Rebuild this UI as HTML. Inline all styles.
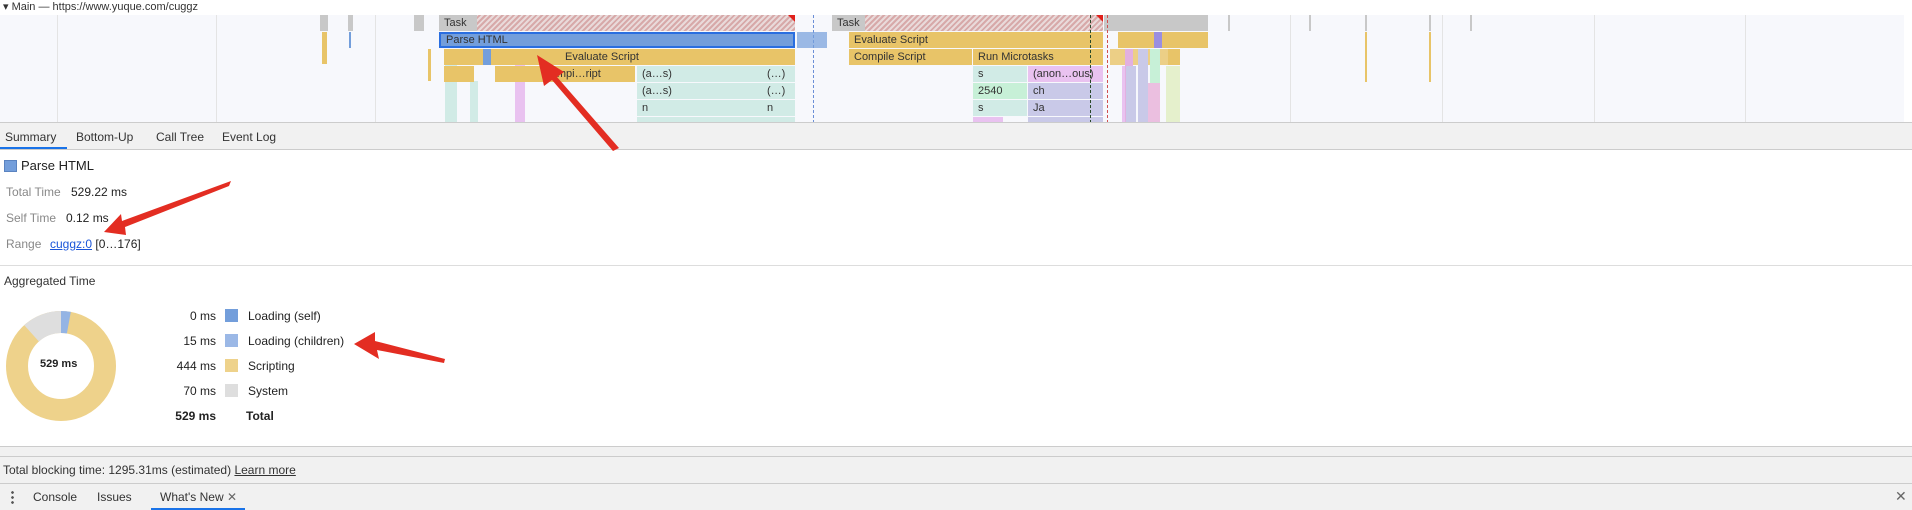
<!DOCTYPE html>
<html><head><meta charset="utf-8"><style>
*{margin:0;padding:0;box-sizing:border-box}
body{width:1912px;height:510px;overflow:hidden;background:#fff;font-family:"Liberation Sans",sans-serif;position:relative;color:#222}
.a{position:absolute}
.f{position:absolute;height:16px;font-size:11px;line-height:16px;padding-left:5px;color:#333;white-space:nowrap;overflow:hidden}
.y{background:#e8c468}.b{background:#739edb}.g{background:#c8c8c8}.t{background:#d1ebe6}.p{background:#e9c2f0}.l{background:#c9c9e8}.gr{background:#c7f0d7}
.s{position:absolute;width:2px}
.lab{font-size:12px;color:#888}
.v{font-size:12px;color:#222}
</style></head><body>
<div class="a" style="left:0;top:0;width:1912px;height:15px;background:#fff;font-size:11px;line-height:15px;padding-left:3px;color:#333">▾ Main — https://www.yuque.com/cuggz</div>
<div class="a" style="left:0;top:15px;width:1912px;height:108px;background:#f7f8fc;overflow:hidden">
 <div class="a" style="left:57px;top:0;width:1px;height:108px;background:#e4e4e4"></div>
 <div class="a" style="left:216px;top:0;width:1px;height:108px;background:#e4e4e4"></div>
 <div class="a" style="left:375px;top:0;width:1px;height:108px;background:#e4e4e4"></div>
 <div class="a" style="left:1290px;top:0;width:1px;height:108px;background:#e4e4e4"></div>
 <div class="a" style="left:1442px;top:0;width:1px;height:108px;background:#e4e4e4"></div>
 <div class="a" style="left:1594px;top:0;width:1px;height:108px;background:#e4e4e4"></div>
 <div class="a" style="left:1745px;top:0;width:1px;height:108px;background:#e4e4e4"></div>
 <div class="s g" style="left:320px;top:0;height:16px;width:8px"></div>
 <div class="s y" style="left:322px;top:17px;height:32px;width:5px"></div>
 <div class="s g" style="left:348px;top:0;height:16px;width:5px"></div>
 <div class="s b" style="left:349px;top:17px;height:16px"></div>
 <div class="s g" style="left:414px;top:0;height:16px;width:10px"></div>
 <div class="s y" style="left:428px;top:34px;height:32px;width:3px"></div>
 <div class="s t" style="left:445px;top:50px;height:58px;width:12px"></div>
 <div class="s p" style="left:515px;top:50px;height:58px;width:10px"></div>
 <div class="s t" style="left:470px;top:66px;height:42px;width:8px"></div>
 <div class="f g" style="left:439px;top:0;width:356px;background:repeating-linear-gradient(135deg,#d7a9a9 0 2px,#e9dada 2px 4px)"><span style="background:#c8c8c8;padding-right:10px;margin-left:-5px;padding-left:5px;display:inline-block">Task</span></div>
 <div class="a" style="left:788px;top:0;width:0;height:0;border-top:7px solid #e0201b;border-left:7px solid transparent"></div>
 <div class="f b" style="left:439px;top:17px;width:356px;border:2px solid #2a6ee0;line-height:12px">Parse HTML</div>
 <div class="f y" style="left:444px;top:34px;width:351px"></div>
 <div class="s b" style="left:483px;top:34px;height:16px;width:8px"></div>
 <div class="f y" style="left:560px;top:34px;width:235px">Evaluate Script</div>
 <div class="f y" style="left:444px;top:51px;width:30px"></div>
 <div class="f y" style="left:495px;top:51px;width:140px">&nbsp; &nbsp; &nbsp; &nbsp; &nbsp; &nbsp; &nbsp; Compi…ript</div>
 <div class="f t" style="left:637px;top:51px;width:158px">(a…s)<span style="position:absolute;left:130px">(…)</span></div>
 <div class="f t" style="left:637px;top:68px;width:158px">(a…s)<span style="position:absolute;left:130px">(…)</span></div>
 <div class="f t" style="left:637px;top:85px;width:158px">n<span style="position:absolute;left:130px">n</span></div>
 <div class="f t" style="left:637px;top:102px;width:158px"></div>
 <div class="a" style="left:813px;top:0;width:1px;height:108px;border-left:1px dashed #6b8fd6"></div>
 <div class="s b" style="left:797px;top:17px;height:16px;width:30px;opacity:.7"></div>
 <div class="f" style="left:832px;top:0;width:271px;background:repeating-linear-gradient(135deg,#d7a9a9 0 2px,#e9dada 2px 4px)"><span style="background:#c8c8c8;padding-right:5px;margin-left:-5px;padding-left:5px;display:inline-block">Task</span></div>
 <div class="a" style="left:1096px;top:0;width:0;height:0;border-top:7px solid #e0201b;border-left:7px solid transparent"></div>
 <div class="f y" style="left:849px;top:17px;width:254px">Evaluate Script</div>
 <div class="f y" style="left:849px;top:34px;width:123px">Compile Script</div>
 <div class="f y" style="left:973px;top:34px;width:130px">Run Microtasks</div>
 <div class="f t" style="left:973px;top:51px;width:54px">s</div>
 <div class="f p" style="left:1028px;top:51px;width:75px">(anon…ous)</div>
 <div class="f gr" style="left:973px;top:68px;width:54px">2540</div>
 <div class="f l" style="left:1028px;top:68px;width:75px">ch</div>
 <div class="f t" style="left:973px;top:85px;width:54px">s</div>
 <div class="f l" style="left:1028px;top:85px;width:75px">Ja</div>
 <div class="f p" style="left:973px;top:102px;width:30px"></div>
 <div class="f l" style="left:1028px;top:102px;width:75px"></div>
 <div class="a g" style="left:1104px;top:0;width:100px;height:16px"></div>
 <div class="a y" style="left:1118px;top:17px;width:90px;height:16px"></div>
 <div class="a l" style="left:1154px;top:17px;width:8px;height:16px;background:#9a8ee0"></div>
 <div class="a y" style="left:1110px;top:34px;width:70px;height:16px;opacity:.8"></div>
 <div class="a y" style="left:1168px;top:34px;width:12px;height:16px"></div>
 <div class="a p" style="left:1122px;top:51px;width:8px;height:57px"></div>
 <div class="a l" style="left:1125px;top:34px;width:8px;height:74px;background:#e2b0e0"></div>
 <div class="a l" style="left:1126px;top:51px;width:10px;height:57px"></div>
 <div class="a l" style="left:1138px;top:34px;width:10px;height:74px"></div>
 <div class="a gr" style="left:1150px;top:34px;width:10px;height:40px"></div>
 <div class="a p" style="left:1148px;top:68px;width:12px;height:40px;background:#ebbfe0"></div>
 <div class="a" style="left:1166px;top:51px;width:14px;height:57px;background:#e5f0cc"></div>
 <div class="a y" style="left:1171px;top:17px;width:5px;height:16px"></div>
 <div class="a" style="left:1090px;top:0;width:1px;height:108px;border-left:1px dashed #2a4a2a"></div>
 <div class="a" style="left:1107px;top:0;width:1px;height:108px;border-left:1px dashed #d05050"></div>
 <div class="s g" style="left:1202px;top:0;height:16px;width:6px"></div>
 <div class="s g" style="left:1228px;top:0;height:16px"></div>
 <div class="s g" style="left:1309px;top:0;height:16px"></div>
 <div class="s g" style="left:1365px;top:0;height:16px"></div>
 <div class="s y" style="left:1365px;top:17px;height:50px"></div>
 <div class="s g" style="left:1429px;top:0;height:16px"></div>
 <div class="s y" style="left:1429px;top:17px;height:50px"></div>
 <div class="s g" style="left:1470px;top:0;height:16px"></div>
 <div class="a" style="left:1904px;top:0;width:8px;height:108px;background:#fff"></div>
</div>
<div class="a" style="left:0;top:122px;width:1912px;height:1px;background:#ccc"></div>
<div class="a" style="left:0;top:123px;width:1912px;height:27px;background:#f1f1f1;border-bottom:1px solid #ccc;font-size:12px;color:#333">
 <span class="a" style="left:5px;top:7px">Summary</span>
 <span class="a" style="left:76px;top:7px">Bottom-Up</span>
 <span class="a" style="left:156px;top:7px">Call Tree</span>
 <span class="a" style="left:222px;top:7px">Event Log</span>
 <div class="a" style="left:0;top:24px;width:67px;height:2px;background:#1a73e8"></div>
</div>
<div class="a" style="left:4px;top:160px;width:13px;height:12px;background:#739edb;border:1px solid #5a83c0"></div>
<div class="a" style="left:21px;top:158px;font-size:13px">Parse HTML</div>
<div class="a lab" style="left:6px;top:185px">Total Time</div><div class="a v" style="left:71px;top:185px">529.22 ms</div>
<div class="a lab" style="left:6px;top:211px">Self Time</div><div class="a v" style="left:66px;top:211px">0.12 ms</div>
<div class="a lab" style="left:6px;top:237px">Range</div><div class="a v" style="left:50px;top:237px"><span style="color:#1a55d9;text-decoration:underline">cuggz:0</span> [0…176]</div>
<div class="a" style="left:0;top:265px;width:1912px;height:1px;background:#ddd"></div>
<div class="a" style="left:4px;top:274px;font-size:12px;color:#333">Aggregated Time</div>
<svg class="a" style="left:5px;top:310px" width="112" height="112" viewBox="0 0 112 112">
 <circle cx="56" cy="56" r="44" fill="none" stroke="#eed28b" stroke-width="22"/>
 <circle cx="56" cy="56" r="44" fill="none" stroke="#dedede" stroke-width="22" stroke-dasharray="36.8 300" transform="rotate(-132 56 56)"/>
 <circle cx="56" cy="56" r="44" fill="none" stroke="#94b4e4" stroke-width="22" stroke-dasharray="7.9 300" transform="rotate(-90 56 56)"/>
</svg>
<div class="a" style="left:40px;top:358px;font-size:11px;font-weight:bold">529 ms</div>
<div class="a v" style="left:150px;top:309px;width:66px;text-align:right">0 ms</div><div class="a" style="left:225px;top:309px;width:13px;height:13px;background:#739edb"></div><div class="a v" style="left:248px;top:309px">Loading (self)</div>
<div class="a v" style="left:150px;top:334px;width:66px;text-align:right">15 ms</div><div class="a" style="left:225px;top:334px;width:13px;height:13px;background:#9bb8e6"></div><div class="a v" style="left:248px;top:334px">Loading (children)</div>
<div class="a v" style="left:150px;top:359px;width:66px;text-align:right">444 ms</div><div class="a" style="left:225px;top:359px;width:13px;height:13px;background:#eed28b"></div><div class="a v" style="left:248px;top:359px">Scripting</div>
<div class="a v" style="left:150px;top:384px;width:66px;text-align:right">70 ms</div><div class="a" style="left:225px;top:384px;width:13px;height:13px;background:#dedede"></div><div class="a v" style="left:248px;top:384px">System</div>
<div class="a v" style="left:150px;top:409px;width:66px;text-align:right;font-weight:bold">529 ms</div><div class="a v" style="left:246px;top:409px;font-weight:bold">Total</div>
<div class="a" style="left:0;top:446px;width:1912px;height:64px;background:#f1f1f1"></div>
<div class="a" style="left:0;top:446px;width:1912px;height:1px;background:#ccc"></div>
<div class="a" style="left:0;top:456px;width:1912px;height:1px;background:#ccc"></div>
<div class="a" style="left:3px;top:463px;font-size:12px;color:#333">Total blocking time: 1295.31ms (estimated) <span style="text-decoration:underline">Learn more</span></div>
<div class="a" style="left:0;top:483px;width:1912px;height:1px;background:#ccc"></div>
<div class="a" style="left:11px;top:490px;width:3px;height:14px;background:radial-gradient(circle,#555 1.2px,transparent 1.5px) 0 0/3px 5px"></div>
<div class="a" style="left:33px;top:490px;font-size:12px;color:#333">Console</div>
<div class="a" style="left:97px;top:490px;font-size:12px;color:#333">Issues</div>
<div class="a" style="left:160px;top:490px;font-size:12px;color:#333">What's New <span style="color:#666">✕</span></div>
<div class="a" style="left:151px;top:508px;width:94px;height:2px;background:#1a73e8"></div>
<div class="a" style="left:1895px;top:488px;font-size:14px;color:#666">✕</div>
<svg class="a" style="left:0;top:0" width="1912" height="510">
 <g fill="#e32d22">
  <polygon points="619,148 613,151 552,80 544,86 537,55 564,72 557,77"/>
  <polygon points="231,181 229,186 125,227 126,235 104,232 121,214 122,221"/>
  <polygon points="445,359 444,363 377,350 379,359 354,344 375,332 375,341"/>
 </g>
</svg>
</body></html>
